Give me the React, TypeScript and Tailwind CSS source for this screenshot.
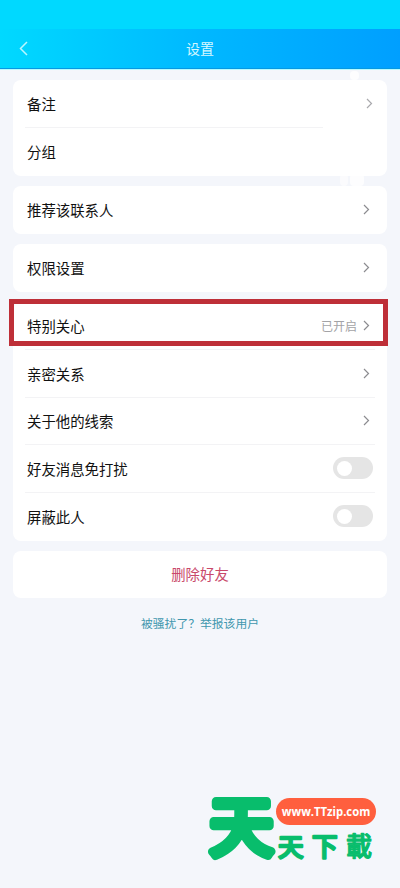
import type { ReactNode } from 'react';

const Chevron = ({ className = 'text-[#8c8c90]' }: { className?: string }) => (
  <svg className={`h-3 w-2 shrink-0 ${className}`} viewBox="0 0 8 12" fill="none" stroke="currentColor" strokeWidth="1.2">
    <path d="M2 1 6.5 5.5 2 10" />
  </svg>
);

const Toggle = () => (
  <span className="-mr-[3px] mb-px flex h-[22px] w-10 items-center rounded-full bg-[#e5e5e5] pl-1">
    <span className="h-[15px] w-[15px] rounded-full bg-white" />
  </span>
);

const Card = ({ children }: { children: ReactNode }) => (
  <section className="rounded-lg bg-white px-3">{children}</section>
);

type RowProps = {
  label: string;
  height?: string;
  children?: ReactNode;
};

const Row = ({ label, height = 'h-12', children }: RowProps) => (
  <div className={`flex items-center justify-between pr-[5px] pl-0.5 ${height}`}>
    <span className="text-[14.4px] leading-5 text-[#111]">{label}</span>
    <span className="flex items-center gap-[5px]">{children}</span>
  </div>
);

const Divider = ({ className = '' }: { className?: string }) => (
  <div className={`-mt-px h-px bg-[#f3f3f5] ${className}`} />
);

const Header = () => (
  <header className="bg-[#00d9ff] pt-[29px]">
    <div className="grid h-10 grid-cols-3 items-center border-b border-[#0798e2] bg-gradient-to-r from-[#00d9ff] via-[#00b8ff] to-[#009fff] px-[19px] pb-0.5">
      <svg className="h-4 w-[9px] text-[#b9f6ff]" viewBox="0 0 9 16" fill="none" stroke="currentColor" strokeWidth="1.5">
        <path d="M8 2 1.5 8.5 8 15" />
      </svg>
      <h1 className="text-center text-sm text-[#d5f7ff]">设置</h1>
    </div>
    <div className="h-px bg-[#b5fbff]" />
  </header>
);

const Watermark = () => (
  <div className="absolute top-[790px] left-[206px] h-[78px] w-[172px] text-[#08bd6c]">
    <svg className="h-full w-full overflow-visible" viewBox="0 0 172 78" fill="currentColor" stroke="currentColor" strokeLinejoin="round" strokeLinecap="round">
      <text x="3.5" y="60" fontSize="64" fontWeight="400" strokeWidth="8.5">天</text>
      <text x="72" y="65.5" fontSize="25.5" fontWeight="400" strokeWidth="2.6">天</text>
      <text x="106" y="65.5" fontSize="25.5" fontWeight="400" strokeWidth="2.6">下</text>
      <text x="140" y="65.5" fontSize="26" fontWeight="500" strokeWidth="1.2">載</text>
    </svg>
    <div className="absolute top-2 left-[70px] flex h-[27px] w-[100px] items-center justify-center rounded-full bg-[#ff5f3e] font-['Open_Sans'] text-[12px] font-bold text-white">
      <span className="scale-x-[.94] pt-px">www.TTzip.com</span>
    </div>
  </div>
);

export default function App() {
  return (
    <div className="relative h-[888px] w-[400px] overflow-hidden bg-[#f4f6fb] font-['Noto_Sans_CJK_SC',sans-serif]">
      <Header />
      <main className="flex flex-col gap-2.5 px-[13px] pt-[10px]">
        <Card>
          <Row label="备注">
            <Chevron className="-mr-[3px] text-[#a9a9ad]" />
          </Row>
          <Divider className="mr-[52px]" />
          <Row label="分组" height="h-[47.5px]" />
        </Card>
        <Card>
          <Row label="推荐该联系人">
            <Chevron />
          </Row>
        </Card>
        <Card>
          <Row label="权限设置">
            <Chevron />
          </Row>
        </Card>
        <Card>
          <Row label="特别关心">
            <span className="text-[12px] text-[#a3a3a6]">已开启</span>
            <Chevron />
          </Row>
          <Divider />
          <Row label="亲密关系">
            <Chevron />
          </Row>
          <Divider />
          <Row label="关于他的线索" height="h-[47.5px]">
            <Chevron />
          </Row>
          <Divider />
          <Row label="好友消息免打扰" height="h-[47.5px]">
            <Toggle />
          </Row>
          <Divider />
          <Row label="屏蔽此人">
            <Toggle />
          </Row>
        </Card>
        <Card>
          <button className="flex h-[47px] w-full items-center justify-center text-[14.4px] text-[#c9496a]">
            删除好友
          </button>
        </Card>
        <p className="mt-[5px] text-center text-[11.8px] leading-5 text-[#4197ae]">被骚扰了？举报该用户</p>
      </main>

      {/* Pale patches between the cards */}
      <div className="absolute top-[71px] left-[350px] h-[9px] w-[9px] rounded-sm bg-white/80" />
      <div className="absolute top-[174px] left-[340px] h-3 w-2 rounded-sm bg-white/60" />
      <div className="absolute top-[174px] left-[350px] h-3 w-3.5 rounded-sm bg-white/80" />

      {/* Highlight frame */}
      <div className="absolute top-[299px] left-[9px] h-[47px] w-[379px] border-5 border-[#be2f38]" />

      <Watermark />
    </div>
  );
}
